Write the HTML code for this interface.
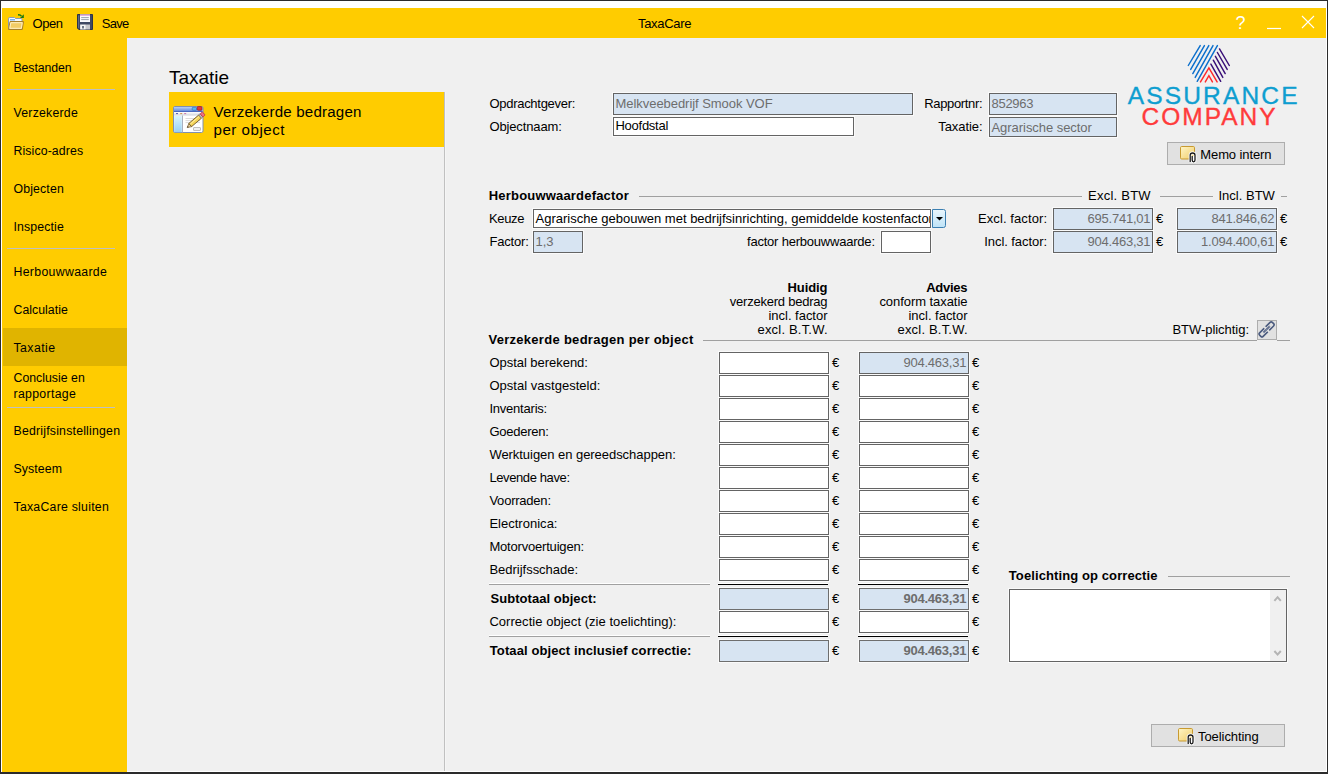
<!DOCTYPE html>
<html><head><meta charset="utf-8"><style>
html,body{margin:0;padding:0;width:1328px;height:774px;overflow:hidden;}
body{position:relative;font-family:"Liberation Sans", sans-serif;}
.t{position:absolute;white-space:nowrap;}
.i{position:absolute;box-sizing:border-box;border:1px solid #646464;box-shadow:0 0 0 1px #FAFAFA;}
</style></head><body>
<div style="position:absolute;left:0px;top:0px;width:1328px;height:774px;background:#2B2B2B"></div><div style="position:absolute;left:1px;top:1px;width:1326px;height:771px;background:#FFFFFF"></div><div style="position:absolute;left:2px;top:8px;width:1324px;height:30px;background:#FFCC00"></div><div style="position:absolute;left:2px;top:38px;width:125px;height:734px;background:#FFCC00"></div><div style="position:absolute;left:127px;top:38px;width:1199px;height:733px;background:#F0F0F0"></div><div style="position:absolute;left:127px;top:38px;width:1199px;height:1px;background:#EEF1FA"></div><div style="position:absolute;left:127px;top:38px;width:1px;height:733px;background:#EEF1FA"></div><div class="t" style="left:32.50px;top:17.00px;font-size:13px;line-height:13px;font-weight:400;color:#000;letter-spacing:-0.434px;">Open</div><div class="t" style="left:101.70px;top:17.00px;font-size:13px;line-height:13px;font-weight:400;color:#000;letter-spacing:-0.710px;">Save</div><div class="t" style="left:638.00px;top:17.00px;font-size:13px;line-height:13px;font-weight:400;color:#000;letter-spacing:-0.320px;">TaxaCare</div><svg style="position:absolute;left:8px;top:14px" width="16" height="16" viewBox="0 0 16 16">
<path d="M0.5 15 V4.8 Q0.5 3.5 1.8 3.5 H6.5 L7.5 4.5 H13 Q14 4.5 14 5.5 V8" fill="#F4F8FF" stroke="#8A9AB8"/>
<path d="M2 5.8 H7" stroke="#58A0F0" stroke-width="1.2"/>
<path d="M2 7.5 H15.5 L14.3 15.5 H0.5 Z" fill="#F2CC66" stroke="#A88028"/>
<path d="M2.8 8.7 H14.2 L13.3 14.3 H1.8 Z" fill="none" stroke="#FFF4D0" stroke-width="0.9"/>
<path d="M10 0.9 Q12.3 0.6 13.4 2.2" stroke="#1A7A10" stroke-width="1.5" fill="none"/>
<path d="M15.8 0.2 V4 H12 Z" fill="#1A7A10"/>
</svg><svg style="position:absolute;left:77px;top:14px" width="16" height="16" viewBox="0 0 16 16">
<path d="M0.5 0.5 H15.5 V15.5 H1.8 L0.5 14.2 Z" fill="#3E4862" stroke="#2C3448"/>
<path d="M1.5 1.5 V14" stroke="#6A7490" stroke-width="0.8"/>
<rect x="3" y="0.5" width="10" height="7.5" fill="#FAFAFC"/>
<rect x="3" y="0.5" width="10" height="1.4" fill="#E0A8D8"/>
<path d="M4.2 3.6 H11.8 M4.2 5.6 H11.8" stroke="#9098A8" stroke-width="0.9"/>
<rect x="3" y="10.5" width="10" height="5" fill="#C8C8CC"/>
<rect x="3.5" y="10.8" width="5" height="4.5" fill="#F4F4F4"/>
<rect x="5" y="12" width="2" height="2.5" fill="#707888"/>
</svg><svg style="position:absolute;left:1230px;top:12px" width="90" height="22" viewBox="0 0 90 22">
<text x="10.5" y="16.6" font-family="Liberation Sans" font-size="18" fill="#fff" text-anchor="middle">?</text>
<path d="M37 16.5 H51" stroke="#fff" stroke-width="1.2"/>
<path d="M72 4 L84 16 M84 4 L72 16" stroke="#fff" stroke-width="1.1"/>
</svg><div style="position:absolute;left:3px;top:328px;width:124px;height:38px;background:#E0B400"></div><div class="t" style="left:13.50px;top:61.59px;font-size:12.3px;line-height:12.3px;font-weight:400;color:#000;letter-spacing:-0.089px;">Bestanden</div><div class="t" style="left:13.50px;top:106.59px;font-size:12.3px;line-height:12.3px;font-weight:400;color:#000;letter-spacing:0.225px;">Verzekerde</div><div class="t" style="left:13.50px;top:144.59px;font-size:12.3px;line-height:12.3px;font-weight:400;color:#000;letter-spacing:0.113px;">Risico-adres</div><div class="t" style="left:13.50px;top:182.59px;font-size:12.3px;line-height:12.3px;font-weight:400;color:#000;letter-spacing:0.146px;">Objecten</div><div class="t" style="left:13.50px;top:220.59px;font-size:12.3px;line-height:12.3px;font-weight:400;color:#000;letter-spacing:0.127px;">Inspectie</div><div class="t" style="left:13.50px;top:265.59px;font-size:12.3px;line-height:12.3px;font-weight:400;color:#000;letter-spacing:0.319px;">Herbouwwaarde</div><div class="t" style="left:13.50px;top:303.59px;font-size:12.3px;line-height:12.3px;font-weight:400;color:#000;letter-spacing:0.027px;">Calculatie</div><div class="t" style="left:13.50px;top:341.59px;font-size:12.3px;line-height:12.3px;font-weight:400;color:#000;letter-spacing:0.421px;">Taxatie</div><div class="t" style="left:13.50px;top:371.59px;font-size:12.3px;line-height:12.3px;font-weight:400;color:#000;letter-spacing:0.013px;">Conclusie en</div><div class="t" style="left:13.50px;top:387.59px;font-size:12.3px;line-height:12.3px;font-weight:400;color:#000;letter-spacing:0.312px;">rapportage</div><div class="t" style="left:13.50px;top:424.59px;font-size:12.3px;line-height:12.3px;font-weight:400;color:#000;letter-spacing:0.208px;">Bedrijfsinstellingen</div><div class="t" style="left:13.50px;top:462.59px;font-size:12.3px;line-height:12.3px;font-weight:400;color:#000;letter-spacing:0.092px;">Systeem</div><div class="t" style="left:13.50px;top:500.59px;font-size:12.3px;line-height:12.3px;font-weight:400;color:#000;letter-spacing:0.242px;">TaxaCare sluiten</div><div style="position:absolute;left:7px;top:89px;width:108px;height:1px;background:#C0C0C0"></div><div style="position:absolute;left:7px;top:248px;width:108px;height:1px;background:#C0C0C0"></div><div style="position:absolute;left:7px;top:407px;width:108px;height:1px;background:#C0C0C0"></div><div class="t" style="left:169.00px;top:67.92px;font-size:19px;line-height:19px;font-weight:400;color:#000;letter-spacing:-0.033px;">Taxatie</div><div style="position:absolute;left:169px;top:92px;width:275px;height:55px;background:#FFCC00"></div><div class="t" style="left:213.50px;top:103.52px;font-size:15.1px;line-height:15.1px;font-weight:400;color:#000;letter-spacing:0.200px;">Verzekerde bedragen</div><div class="t" style="left:213.50px;top:122.32px;font-size:15.1px;line-height:15.1px;font-weight:400;color:#000;letter-spacing:0.521px;">per object</div><div style="position:absolute;left:444px;top:92px;width:1px;height:679px;background:#C0C0C0"></div><div style="position:absolute;left:445px;top:92px;width:1px;height:679px;background:#F5F5F5"></div><div style="position:absolute;left:169px;top:147px;width:275px;height:1px;background:#EEF1FA"></div><svg style="position:absolute;left:173px;top:104px" width="34" height="32" viewBox="0 0 34 32">
<defs>
<linearGradient id="fbar" x1="0" y1="0" x2="0" y2="1"><stop offset="0" stop-color="#B8D0F4"/><stop offset="1" stop-color="#5E86D8"/></linearGradient>
<linearGradient id="fside" x1="0" y1="0" x2="0" y2="1"><stop offset="0" stop-color="#D8F4FC"/><stop offset="1" stop-color="#98D0F4"/></linearGradient>
<linearGradient id="fmenu" x1="0" y1="0" x2="0" y2="1"><stop offset="0" stop-color="#FFFFFF"/><stop offset="1" stop-color="#D0D4DC"/></linearGradient>
</defs>
<rect x="0.5" y="2.5" width="29.5" height="26" rx="1.5" fill="#FFFFFF" stroke="#8090B0"/>
<rect x="1" y="3" width="28.5" height="4.5" fill="url(#fbar)"/>
<path d="M1 7.5 H29.5" stroke="#4A68C0"/>
<rect x="19.2" y="3.3" width="4.3" height="3" rx="0.8" fill="#5AB8F0" stroke="#2A6AB8" stroke-width="0.6"/>
<rect x="24.2" y="2.6" width="4.8" height="3.6" rx="1" fill="#E03838" stroke="#A01818" stroke-width="0.7"/>
<rect x="1" y="8" width="28.5" height="3.5" fill="url(#fmenu)"/>
<path d="M3 9.6 H5 " stroke="#4858B0" stroke-width="1"/><path d="M7.2 9.6 H9.2" stroke="#C89050" stroke-width="1"/><path d="M11.2 9.6 H13.2" stroke="#C870A8" stroke-width="1"/>
<rect x="1.2" y="12" width="7.6" height="16.2" fill="url(#fside)"/>
<path d="M9.5 11.5 V28.5" stroke="#A8B0C0"/>
<path d="M12.5 14.5 H27 M12.5 16.6 H27 M12.5 18.6 H27" stroke="#D0D0D0" stroke-width="0.8"/>
<rect x="20.5" y="23.5" width="7" height="3" rx="0.5" fill="#F0F0F0" stroke="#B0B0B0" stroke-width="0.8"/>
<g transform="translate(14.2 23.6) rotate(-40.5)">
<path d="M0 0 L4 -2.1 V2.1 Z" fill="#E8D0A0" stroke="#7A6030" stroke-width="0.7"/>
<path d="M0 0 L1.4 -0.75 V0.75 Z" fill="#403020"/>
<rect x="4" y="-2.1" width="13" height="4.2" fill="#F4D458" stroke="#6A5020" stroke-width="0.8"/>
<path d="M4.5 -0.7 H16.5" stroke="#FFF0A8" stroke-width="0.9"/>
<rect x="17" y="-2.1" width="1.8" height="4.2" fill="#C8C8C8" stroke="#707070" stroke-width="0.6"/>
<rect x="18.8" y="-2.1" width="3" height="4.2" rx="0.8" fill="#F07080" stroke="#B03040" stroke-width="0.7"/>
</g>
</svg><div class="t" style="left:489.40px;top:97.00px;font-size:13px;line-height:13px;font-weight:400;color:#000;letter-spacing:-0.277px;">Opdrachtgever:</div><div class="t" style="left:489.40px;top:120.00px;font-size:13px;line-height:13px;font-weight:400;color:#000;letter-spacing:-0.120px;">Objectnaam:</div><div class="i" style="left:613px;top:93px;width:300px;height:22px;border-color:#646464;background:#D7E4F2;"></div><div class="t" style="left:615.50px;top:97.00px;font-size:13px;line-height:13px;font-weight:400;color:#6D6D6D;letter-spacing:-0.050px;">Melkveebedrijf Smook VOF</div><div class="i" style="left:613px;top:117px;width:241px;height:19px;border-color:#646464;background:#FFFFFF;"></div><div class="t" style="left:615.50px;top:119.00px;font-size:13px;line-height:13px;font-weight:400;color:#000;letter-spacing:-0.265px;">Hoofdstal</div><div class="t" style="right:345.86px;text-align:right;top:97.00px;font-size:13px;line-height:13px;font-weight:400;color:#000;letter-spacing:-0.358px;">Rapportnr:</div><div class="t" style="right:345.59px;text-align:right;top:120.00px;font-size:13px;line-height:13px;font-weight:400;color:#000;letter-spacing:-0.086px;">Taxatie:</div><div class="i" style="left:989px;top:93px;width:128px;height:22px;border-color:#646464;background:#D7E4F2;"></div><div class="t" style="left:991.50px;top:97.00px;font-size:13px;line-height:13px;font-weight:400;color:#6D6D6D;letter-spacing:-0.276px;">852963</div><div class="i" style="left:989px;top:117px;width:128px;height:20px;border-color:#646464;background:#D7E4F2;"></div><div class="t" style="left:991.50px;top:121.00px;font-size:13px;line-height:13px;font-weight:400;color:#6D6D6D;letter-spacing:-0.050px;">Agrarische sector</div><div class="t" style="left:1127.80px;top:83.76px;font-size:24.5px;line-height:24.5px;font-weight:400;color:#0E9ED0;letter-spacing:2.152px;-webkit-text-stroke:0.35px #0E9ED0;">ASSURANCE</div><div class="t" style="left:1141.60px;top:104.76px;font-size:24.5px;line-height:24.5px;font-weight:400;color:#FF3B3B;letter-spacing:1.990px;-webkit-text-stroke:0.35px #FF3B3B;">COMPANY</div><svg style="position:absolute;left:1180px;top:40px" width="60" height="46" viewBox="0 0 60 46">
<g stroke="#0B6FCC" stroke-width="1.45" stroke-linecap="round" fill="none">
<path d="M8.3 25.5 L20.2 5.6"/><path d="M10.7 29.4 L24.4 5.6"/><path d="M12.8 33.6 L28.8 5.6"/>
<path d="M15.2 37.4 L33 5.6"/><path d="M17.2 41.3 L37.4 5.6"/>
</g>
<g stroke="#3A1078" stroke-width="1.45" stroke-linecap="round" fill="none">
<path d="M39.5 8.9 L49.3 25.5"/><path d="M37.4 12.5 L47.2 29.4"/><path d="M35.4 16.3 L45.2 33.6"/>
<path d="M33.3 20.2 L42.8 37.4"/><path d="M30.9 24.1 L40.7 41.3"/>
</g>
<g stroke="#FF2A2A" stroke-width="1.45" stroke-linecap="round" fill="none">
<path d="M20.5 41.9 L28.9 27.9 L37.1 41.9"/><path d="M25.3 41.9 L28.9 35.7 L32.4 41.9"/>
</g>
</svg><div style="position:absolute;left:1167px;top:142px;width:118px;height:23px;box-sizing:border-box;border:1px solid #ADADAD;background:#E1E1E1"></div><div class="t" style="left:1200.30px;top:148.00px;font-size:13px;line-height:13px;font-weight:400;color:#000;letter-spacing:-0.105px;">Memo intern</div><svg style="position:absolute;left:1180px;top:146px" width="18" height="17" viewBox="0 0 18 17">
<defs><linearGradient id="ng" x1="0" y1="0" x2="1" y2="1"><stop offset="0" stop-color="#FFF6C8"/><stop offset="1" stop-color="#F0CC68"/></linearGradient></defs>
<rect x="0.5" y="0.5" width="14" height="12.5" rx="1.2" fill="url(#ng)" stroke="#C89A30"/>
<path d="M10.2 16 V9.2 Q10.2 7 12.6 7 Q15 7 15 9.2 V14 Q15 15.8 13.6 15.8 Q12.2 15.8 12.2 14 V10" fill="none" stroke="#fff" stroke-width="3"/>
<path d="M10.2 16 V9.2 Q10.2 7 12.6 7 Q15 7 15 9.2 V14 Q15 15.8 13.6 15.8 Q12.2 15.8 12.2 14 V10" fill="none" stroke="#1A1A1A" stroke-width="1.3"/>
</svg><div class="t" style="left:488.75px;top:189.00px;font-size:13px;line-height:13px;font-weight:700;color:#000;letter-spacing:0.193px;">Herbouwwaardefactor</div><div style="position:absolute;left:639px;top:196px;width:443px;height:1px;background:#A0A0A0"></div><div class="t" style="left:1088.00px;top:189.00px;font-size:13px;line-height:13px;font-weight:400;color:#000;letter-spacing:0.242px;">Excl. BTW</div><div style="position:absolute;left:1160px;top:196px;width:53px;height:1px;background:#A0A0A0"></div><div class="t" style="left:1218.40px;top:189.00px;font-size:13px;line-height:13px;font-weight:400;color:#000;letter-spacing:0.021px;">Incl. BTW</div><div style="position:absolute;left:1281px;top:196px;width:6px;height:1px;background:#A0A0A0"></div><div class="t" style="left:489.00px;top:212.00px;font-size:13px;line-height:13px;font-weight:400;color:#000;letter-spacing:-0.340px;">Keuze</div><div class="i" style="left:533px;top:209px;width:398px;height:19px;background:#fff;overflow:hidden;"><div class="t" style="left:1.5px;top:1.75px;font-size:13px;line-height:13px;letter-spacing:0px">Agrarische gebouwen met bedrijfsinrichting, gemiddelde kostenfactor</div></div><svg style="position:absolute;left:931px;top:208px" width="16" height="21" viewBox="0 0 16 21">
<defs><linearGradient id="dg" x1="0" y1="0" x2="0" y2="1"><stop offset="0" stop-color="#EAF6FD"/><stop offset="1" stop-color="#BEE3F7"/></linearGradient></defs>
<path d="M1.5 1.5 H12.5 Q14.5 1.5 14.5 3.5 V17.5 Q14.5 19.5 12.5 19.5 H1.5 Z" fill="url(#dg)" stroke="#3C7FB1"/>
<path d="M5 9 H12 L8.5 12.5 Z" fill="#000"/>
</svg><div class="t" style="right:280.91px;text-align:right;top:212.00px;font-size:13px;line-height:13px;font-weight:400;color:#000;letter-spacing:0.091px;">Excl. factor:</div><div class="i" style="left:1053px;top:208px;width:100px;height:22px;border-color:#646464;background:#D7E4F2;"></div><div class="t" style="right:177.73px;text-align:right;top:212.00px;font-size:13px;line-height:13px;font-weight:400;color:#6D6D6D;letter-spacing:-0.229px;">695.741,01</div><div class="t" style="left:1156.00px;top:212.00px;font-size:13px;line-height:13px;font-weight:400;color:#000;letter-spacing:-0.050px;">€</div><div class="i" style="left:1177px;top:208px;width:100px;height:22px;border-color:#646464;background:#D7E4F2;"></div><div class="t" style="right:53.72px;text-align:right;top:212.00px;font-size:13px;line-height:13px;font-weight:400;color:#6D6D6D;letter-spacing:-0.220px;">841.846,62</div><div class="t" style="left:1280.00px;top:212.00px;font-size:13px;line-height:13px;font-weight:400;color:#000;letter-spacing:-0.050px;">€</div><div class="t" style="left:489.50px;top:235.00px;font-size:13px;line-height:13px;font-weight:400;color:#000;letter-spacing:-0.201px;">Factor:</div><div class="i" style="left:533px;top:231px;width:50px;height:22px;border-color:#646464;background:#D7E4F2;"></div><div class="t" style="left:535.50px;top:235.00px;font-size:13px;line-height:13px;font-weight:400;color:#6D6D6D;letter-spacing:-0.050px;">1,3</div><div class="t" style="right:453.21px;text-align:right;top:235.00px;font-size:13px;line-height:13px;font-weight:400;color:#000;letter-spacing:-0.212px;">factor herbouwwaarde:</div><div class="i" style="left:881px;top:231px;width:50px;height:22px;border-color:#646464;background:#FFFFFF;"></div><div class="t" style="right:281.07px;text-align:right;top:235.00px;font-size:13px;line-height:13px;font-weight:400;color:#000;letter-spacing:-0.069px;">Incl. factor:</div><div class="i" style="left:1053px;top:231px;width:100px;height:22px;border-color:#646464;background:#D7E4F2;"></div><div class="t" style="right:177.73px;text-align:right;top:235.00px;font-size:13px;line-height:13px;font-weight:400;color:#6D6D6D;letter-spacing:-0.229px;">904.463,31</div><div class="t" style="left:1156.00px;top:235.00px;font-size:13px;line-height:13px;font-weight:400;color:#000;letter-spacing:-0.050px;">€</div><div class="i" style="left:1177px;top:231px;width:100px;height:22px;border-color:#646464;background:#D7E4F2;"></div><div class="t" style="right:53.72px;text-align:right;top:235.00px;font-size:13px;line-height:13px;font-weight:400;color:#6D6D6D;letter-spacing:-0.220px;">1.094.400,61</div><div class="t" style="left:1280.00px;top:235.00px;font-size:13px;line-height:13px;font-weight:400;color:#000;letter-spacing:-0.050px;">€</div><div class="t" style="right:500.59px;text-align:right;top:281.00px;font-size:13px;line-height:13px;font-weight:700;color:#000;letter-spacing:-0.087px;">Huidig</div><div class="t" style="right:500.73px;text-align:right;top:295.00px;font-size:13px;line-height:13px;font-weight:400;color:#000;letter-spacing:-0.228px;">verzekerd bedrag</div><div class="t" style="right:500.52px;text-align:right;top:309.00px;font-size:13px;line-height:13px;font-weight:400;color:#000;letter-spacing:-0.022px;">incl. factor</div><div class="t" style="right:500.31px;text-align:right;top:323.00px;font-size:13px;line-height:13px;font-weight:400;color:#000;letter-spacing:0.191px;">excl. B.T.W.</div><div class="t" style="right:360.78px;text-align:right;top:281.00px;font-size:13px;line-height:13px;font-weight:700;color:#000;letter-spacing:-0.276px;">Advies</div><div class="t" style="right:360.56px;text-align:right;top:295.00px;font-size:13px;line-height:13px;font-weight:400;color:#000;letter-spacing:-0.055px;">conform taxatie</div><div class="t" style="right:360.52px;text-align:right;top:309.00px;font-size:13px;line-height:13px;font-weight:400;color:#000;letter-spacing:-0.022px;">incl. factor</div><div class="t" style="right:360.31px;text-align:right;top:323.00px;font-size:13px;line-height:13px;font-weight:400;color:#000;letter-spacing:0.191px;">excl. B.T.W.</div><div class="t" style="left:488.40px;top:333.00px;font-size:13px;line-height:13px;font-weight:700;color:#000;letter-spacing:0.292px;">Verzekerde bedragen per object</div><div style="position:absolute;left:703px;top:340px;width:554px;height:1px;background:#A0A0A0"></div><div style="position:absolute;left:1277px;top:340px;width:13px;height:1px;background:#A0A0A0"></div><div class="t" style="right:79.04px;text-align:right;top:323.00px;font-size:13px;line-height:13px;font-weight:400;color:#000;letter-spacing:-0.038px;">BTW-plichtig:</div><div style="position:absolute;left:1257px;top:320px;width:20px;height:20px;box-sizing:border-box;border:1px solid #ADADAD;background:#E1E1E1"></div><svg style="position:absolute;left:1254px;top:317px" width="26" height="26" viewBox="0 0 26 26">
<g transform="translate(12.6 12.4) rotate(-45)">
<rect x="-9" y="-2.5" width="18" height="5" rx="1.6" fill="none" stroke="#4A5A7E" stroke-width="1.55"/>
<rect x="-0.9" y="-4" width="2.1" height="8" fill="#E1E1E1"/>
<path d="M-4.6 0 H4.6" stroke="#4A5A7E" stroke-width="1.6"/>
<path d="M-4.6 0 H4.6" stroke="#FFFFFF" stroke-width="0.5" stroke-dasharray="1 1" opacity="0.8"/>
</g>
</svg><div class="t" style="left:489.40px;top:356.00px;font-size:13px;line-height:13px;font-weight:400;color:#000;letter-spacing:-0.034px;">Opstal berekend:</div><div class="i" style="left:719px;top:352px;width:110px;height:22px;border-color:#646464;background:#FFFFFF;"></div><div class="t" style="left:832.00px;top:356.00px;font-size:13px;line-height:13px;font-weight:400;color:#000;letter-spacing:-0.050px;">€</div><div class="i" style="left:859px;top:352px;width:110px;height:22px;border-color:#646464;background:#D7E4F2;"></div><div class="t" style="right:361.72px;text-align:right;top:356.00px;font-size:13px;line-height:13px;font-weight:400;color:#6D6D6D;letter-spacing:-0.220px;">904.463,31</div><div class="t" style="left:972.00px;top:356.00px;font-size:13px;line-height:13px;font-weight:400;color:#000;letter-spacing:-0.050px;">€</div><div class="t" style="left:489.40px;top:379.00px;font-size:13px;line-height:13px;font-weight:400;color:#000;letter-spacing:0.025px;">Opstal vastgesteld:</div><div class="i" style="left:719px;top:375px;width:110px;height:22px;border-color:#646464;background:#FFFFFF;"></div><div class="t" style="left:832.00px;top:379.00px;font-size:13px;line-height:13px;font-weight:400;color:#000;letter-spacing:-0.050px;">€</div><div class="i" style="left:859px;top:375px;width:110px;height:22px;border-color:#646464;background:#FFFFFF;"></div><div class="t" style="left:972.00px;top:379.00px;font-size:13px;line-height:13px;font-weight:400;color:#000;letter-spacing:-0.050px;">€</div><div class="t" style="left:489.40px;top:402.00px;font-size:13px;line-height:13px;font-weight:400;color:#000;letter-spacing:-0.217px;">Inventaris:</div><div class="i" style="left:719px;top:398px;width:110px;height:22px;border-color:#646464;background:#FFFFFF;"></div><div class="t" style="left:832.00px;top:402.00px;font-size:13px;line-height:13px;font-weight:400;color:#000;letter-spacing:-0.050px;">€</div><div class="i" style="left:859px;top:398px;width:110px;height:22px;border-color:#646464;background:#FFFFFF;"></div><div class="t" style="left:972.00px;top:402.00px;font-size:13px;line-height:13px;font-weight:400;color:#000;letter-spacing:-0.050px;">€</div><div class="t" style="left:489.40px;top:425.00px;font-size:13px;line-height:13px;font-weight:400;color:#000;letter-spacing:-0.254px;">Goederen:</div><div class="i" style="left:719px;top:421px;width:110px;height:22px;border-color:#646464;background:#FFFFFF;"></div><div class="t" style="left:832.00px;top:425.00px;font-size:13px;line-height:13px;font-weight:400;color:#000;letter-spacing:-0.050px;">€</div><div class="i" style="left:859px;top:421px;width:110px;height:22px;border-color:#646464;background:#FFFFFF;"></div><div class="t" style="left:972.00px;top:425.00px;font-size:13px;line-height:13px;font-weight:400;color:#000;letter-spacing:-0.050px;">€</div><div class="t" style="left:489.40px;top:448.00px;font-size:13px;line-height:13px;font-weight:400;color:#000;letter-spacing:-0.045px;">Werktuigen en gereedschappen:</div><div class="i" style="left:719px;top:444px;width:110px;height:22px;border-color:#646464;background:#FFFFFF;"></div><div class="t" style="left:832.00px;top:448.00px;font-size:13px;line-height:13px;font-weight:400;color:#000;letter-spacing:-0.050px;">€</div><div class="i" style="left:859px;top:444px;width:110px;height:22px;border-color:#646464;background:#FFFFFF;"></div><div class="t" style="left:972.00px;top:448.00px;font-size:13px;line-height:13px;font-weight:400;color:#000;letter-spacing:-0.050px;">€</div><div class="t" style="left:489.40px;top:471.00px;font-size:13px;line-height:13px;font-weight:400;color:#000;letter-spacing:-0.391px;">Levende have:</div><div class="i" style="left:719px;top:467px;width:110px;height:22px;border-color:#646464;background:#FFFFFF;"></div><div class="t" style="left:832.00px;top:471.00px;font-size:13px;line-height:13px;font-weight:400;color:#000;letter-spacing:-0.050px;">€</div><div class="i" style="left:859px;top:467px;width:110px;height:22px;border-color:#646464;background:#FFFFFF;"></div><div class="t" style="left:972.00px;top:471.00px;font-size:13px;line-height:13px;font-weight:400;color:#000;letter-spacing:-0.050px;">€</div><div class="t" style="left:489.40px;top:494.00px;font-size:13px;line-height:13px;font-weight:400;color:#000;letter-spacing:-0.223px;">Voorraden:</div><div class="i" style="left:719px;top:490px;width:110px;height:22px;border-color:#646464;background:#FFFFFF;"></div><div class="t" style="left:832.00px;top:494.00px;font-size:13px;line-height:13px;font-weight:400;color:#000;letter-spacing:-0.050px;">€</div><div class="i" style="left:859px;top:490px;width:110px;height:22px;border-color:#646464;background:#FFFFFF;"></div><div class="t" style="left:972.00px;top:494.00px;font-size:13px;line-height:13px;font-weight:400;color:#000;letter-spacing:-0.050px;">€</div><div class="t" style="left:489.40px;top:517.00px;font-size:13px;line-height:13px;font-weight:400;color:#000;letter-spacing:0.016px;">Electronica:</div><div class="i" style="left:719px;top:513px;width:110px;height:22px;border-color:#646464;background:#FFFFFF;"></div><div class="t" style="left:832.00px;top:517.00px;font-size:13px;line-height:13px;font-weight:400;color:#000;letter-spacing:-0.050px;">€</div><div class="i" style="left:859px;top:513px;width:110px;height:22px;border-color:#646464;background:#FFFFFF;"></div><div class="t" style="left:972.00px;top:517.00px;font-size:13px;line-height:13px;font-weight:400;color:#000;letter-spacing:-0.050px;">€</div><div class="t" style="left:489.40px;top:540.00px;font-size:13px;line-height:13px;font-weight:400;color:#000;letter-spacing:-0.190px;">Motorvoertuigen:</div><div class="i" style="left:719px;top:536px;width:110px;height:22px;border-color:#646464;background:#FFFFFF;"></div><div class="t" style="left:832.00px;top:540.00px;font-size:13px;line-height:13px;font-weight:400;color:#000;letter-spacing:-0.050px;">€</div><div class="i" style="left:859px;top:536px;width:110px;height:22px;border-color:#646464;background:#FFFFFF;"></div><div class="t" style="left:972.00px;top:540.00px;font-size:13px;line-height:13px;font-weight:400;color:#000;letter-spacing:-0.050px;">€</div><div class="t" style="left:489.40px;top:563.00px;font-size:13px;line-height:13px;font-weight:400;color:#000;letter-spacing:-0.013px;">Bedrijfsschade:</div><div class="i" style="left:719px;top:559px;width:110px;height:22px;border-color:#646464;background:#FFFFFF;"></div><div class="t" style="left:832.00px;top:563.00px;font-size:13px;line-height:13px;font-weight:400;color:#000;letter-spacing:-0.050px;">€</div><div class="i" style="left:859px;top:559px;width:110px;height:22px;border-color:#646464;background:#FFFFFF;"></div><div class="t" style="left:972.00px;top:563.00px;font-size:13px;line-height:13px;font-weight:400;color:#000;letter-spacing:-0.050px;">€</div><div style="position:absolute;left:489px;top:583px;width:221px;height:1px;background:#FFFFFF"></div><div style="position:absolute;left:489px;top:584px;width:221px;height:1px;background:#A0A0A0"></div><div style="position:absolute;left:718px;top:583px;width:110px;height:1px;background:#FFFFFF"></div><div style="position:absolute;left:718px;top:584px;width:110px;height:1px;background:#000"></div><div style="position:absolute;left:858px;top:583px;width:110px;height:1px;background:#FFFFFF"></div><div style="position:absolute;left:858px;top:584px;width:110px;height:1px;background:#000"></div><div class="t" style="left:490.60px;top:592.00px;font-size:13px;line-height:13px;font-weight:700;color:#000;letter-spacing:0.034px;">Subtotaal object:</div><div class="i" style="left:719px;top:588px;width:110px;height:22px;border-color:#6E6E6E;background:#D7E4F2;"></div><div class="t" style="left:832.00px;top:592.00px;font-size:13px;line-height:13px;font-weight:400;color:#000;letter-spacing:-0.050px;">€</div><div class="i" style="left:859px;top:588px;width:110px;height:22px;border-color:#6E6E6E;background:#D7E4F2;"></div><div class="t" style="right:361.72px;text-align:right;top:592.00px;font-size:13px;line-height:13px;font-weight:700;color:#6D6D6D;letter-spacing:-0.220px;">904.463,31</div><div class="t" style="left:972.00px;top:592.00px;font-size:13px;line-height:13px;font-weight:400;color:#000;letter-spacing:-0.050px;">€</div><div class="t" style="left:489.40px;top:615.00px;font-size:13px;line-height:13px;font-weight:400;color:#000;letter-spacing:0.039px;">Correctie object (zie toelichting):</div><div class="i" style="left:719px;top:611px;width:110px;height:22px;border-color:#646464;background:#FFFFFF;"></div><div class="t" style="left:832.00px;top:615.00px;font-size:13px;line-height:13px;font-weight:400;color:#000;letter-spacing:-0.050px;">€</div><div class="i" style="left:859px;top:611px;width:110px;height:22px;border-color:#646464;background:#FFFFFF;"></div><div class="t" style="left:972.00px;top:615.00px;font-size:13px;line-height:13px;font-weight:400;color:#000;letter-spacing:-0.050px;">€</div><div style="position:absolute;left:489px;top:635px;width:221px;height:1px;background:#FFFFFF"></div><div style="position:absolute;left:489px;top:636px;width:221px;height:1px;background:#A0A0A0"></div><div style="position:absolute;left:718px;top:635px;width:110px;height:1px;background:#FFFFFF"></div><div style="position:absolute;left:718px;top:636px;width:110px;height:1px;background:#000"></div><div style="position:absolute;left:858px;top:635px;width:110px;height:1px;background:#FFFFFF"></div><div style="position:absolute;left:858px;top:636px;width:110px;height:1px;background:#000"></div><div class="t" style="left:489.80px;top:644.00px;font-size:13px;line-height:13px;font-weight:700;color:#000;letter-spacing:0.096px;">Totaal object inclusief correctie:</div><div class="i" style="left:719px;top:640px;width:110px;height:22px;border-color:#6E6E6E;background:#D7E4F2;"></div><div class="t" style="left:832.00px;top:644.00px;font-size:13px;line-height:13px;font-weight:400;color:#000;letter-spacing:-0.050px;">€</div><div class="i" style="left:859px;top:640px;width:110px;height:22px;border-color:#6E6E6E;background:#D7E4F2;"></div><div class="t" style="right:361.72px;text-align:right;top:644.00px;font-size:13px;line-height:13px;font-weight:700;color:#6D6D6D;letter-spacing:-0.220px;">904.463,31</div><div class="t" style="left:972.00px;top:644.00px;font-size:13px;line-height:13px;font-weight:400;color:#000;letter-spacing:-0.050px;">€</div><div class="t" style="left:1008.80px;top:569.00px;font-size:13px;line-height:13px;font-weight:700;color:#000;letter-spacing:0.100px;">Toelichting op correctie</div><div style="position:absolute;left:1168px;top:576px;width:122px;height:1px;background:#A0A0A0"></div><div class="i" style="left:1009px;top:589px;width:278px;height:73px;background:#fff"></div><div style="position:absolute;left:1270px;top:590px;width:16px;height:71px;background:#F0F0F0"></div><svg style="position:absolute;left:1270px;top:590px" width="16" height="71" viewBox="0 0 16 71">
<path d="M4.4 10.8 L7.6 7.2 L10.8 10.8" fill="none" stroke="#B4B4B4" stroke-width="2"/>
<path d="M4.4 61 L7.6 64.6 L10.8 61" fill="none" stroke="#B4B4B4" stroke-width="2"/>
</svg><div style="position:absolute;left:1151px;top:724px;width:134px;height:23px;box-sizing:border-box;border:1px solid #ADADAD;background:#E1E1E1"></div><div class="t" style="left:1198.00px;top:730.00px;font-size:13px;line-height:13px;font-weight:400;color:#000;letter-spacing:-0.068px;">Toelichting</div><svg style="position:absolute;left:1178px;top:728px" width="18" height="17" viewBox="0 0 18 17">
<defs><linearGradient id="ng" x1="0" y1="0" x2="1" y2="1"><stop offset="0" stop-color="#FFF6C8"/><stop offset="1" stop-color="#F0CC68"/></linearGradient></defs>
<rect x="0.5" y="0.5" width="14" height="12.5" rx="1.2" fill="url(#ng)" stroke="#C89A30"/>
<path d="M10.2 16 V9.2 Q10.2 7 12.6 7 Q15 7 15 9.2 V14 Q15 15.8 13.6 15.8 Q12.2 15.8 12.2 14 V10" fill="none" stroke="#fff" stroke-width="3"/>
<path d="M10.2 16 V9.2 Q10.2 7 12.6 7 Q15 7 15 9.2 V14 Q15 15.8 13.6 15.8 Q12.2 15.8 12.2 14 V10" fill="none" stroke="#1A1A1A" stroke-width="1.3"/>
</svg>
</body></html>
